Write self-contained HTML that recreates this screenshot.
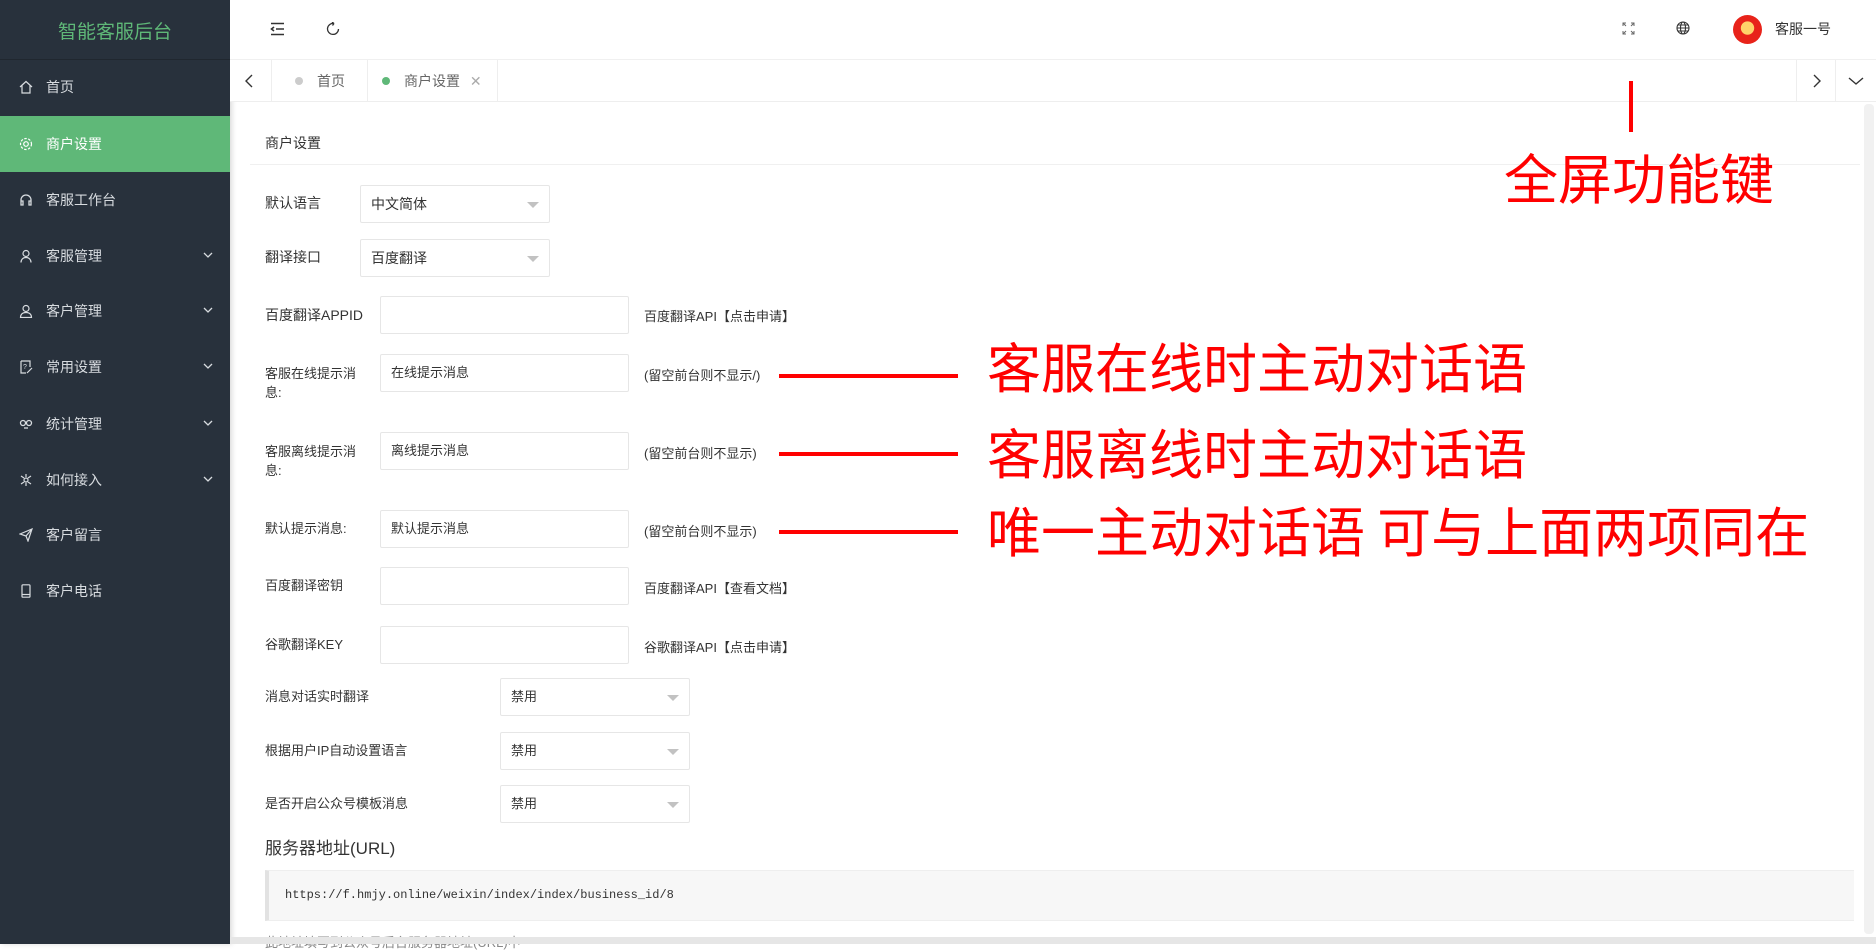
<!DOCTYPE html>
<html><head><meta charset="utf-8"><style>
*{box-sizing:border-box;margin:0;padding:0}
body{width:1876px;height:944px;overflow:hidden;background:#fff;font-family:"Liberation Sans","Noto Sans CJK SC",sans-serif;font-size:14px;color:#333;position:relative}
.abs{position:absolute}
#side{left:0;top:0;width:230px;height:944px;background:#28313c;box-shadow:2px 0 5px rgba(0,0,0,.15)}
#logo{left:0;top:0;width:230px;height:60px;line-height:66px;text-align:center;color:#5fb878;font-size:19px;border-bottom:1px solid #20272f}
.mi{left:0;width:230px;height:56px;color:#d8dce0;font-size:14px;line-height:56px;padding-left:46px}
.mi.act{background:#5fb878;color:#fff}
.mi .ic{position:absolute;left:19px;top:21px;width:14px;height:14px}
.mi .ar{position:absolute;left:202px;top:21px}
#top{left:230px;top:0;width:1646px;height:60px;background:#fff;border-bottom:1px solid #f0f0f0}
#tabs{left:230px;top:60px;width:1646px;height:42px;background:#fff;border-bottom:1px solid #eee}
.sep{top:0;width:1px;height:42px;background:#eee}
.tab{top:0;height:42px;line-height:42px;color:#666;font-size:14px}
.dot{display:inline-block;width:8px;height:8px;border-radius:50%;margin-right:14px;vertical-align:1px}
.lbl{left:265px;font-size:14px;color:#333;line-height:18px}
.inp{height:38px;border:1px solid #e6e6e6;border-radius:2px;background:#fff;padding-left:10px;line-height:36px;font-size:14px;color:#333}
.sel::after{content:"";position:absolute;right:10px;top:16px;border:6px solid transparent;border-top-color:#c2c2c2;border-top-width:6px}
.help{left:644px;font-size:13px;color:#333}
.red{background:#f00}
.rt{color:#f00;font-family:"WenQuanYi Zen Hei","Noto Sans CJK SC",sans-serif;font-size:54px;line-height:60px;white-space:nowrap}
</style></head><body>
<div id="side" class="abs"></div>
<div id="logo" class="abs">智能客服后台</div>

<div class="abs mi" style="top:59px"><svg class="ic" viewBox="0 0 14 14" fill="none" stroke="#d8dce0" stroke-width="1.2"><path d="M1 7L7 1.5 13 7M3 5.5V13h8V5.5"/></svg>首页</div>
<div class="abs mi act" style="top:116px"><svg class="ic" viewBox="0 0 14 14" fill="none" stroke="#fff" stroke-width="1.2"><circle cx="7" cy="7" r="2.3"/><circle cx="7" cy="7" r="5.5" stroke-dasharray="2.5 1.5"/></svg>商户设置</div>
<div class="abs mi" style="top:172px"><svg class="ic" viewBox="0 0 14 14" fill="none" stroke="#d8dce0" stroke-width="1.3"><path d="M2 9V7a5 5 0 0110 0v2M2 8h2v4H2zM10 8h2v4h-2z"/></svg>客服工作台</div>
<div class="abs mi" style="top:228px"><svg class="ic" viewBox="0 0 14 14" fill="none" stroke="#d8dce0" stroke-width="1.2"><circle cx="7" cy="4.5" r="3"/><path d="M2 13.5c0-3 2-5 5-5s5 2 5 5"/></svg>客服管理<svg class="ar" width="12" height="12" viewBox="0 0 12 12" fill="none" stroke="#d8dce0" stroke-width="1.3"><path d="M2 4l4 4 4-4"/></svg></div>
<div class="abs mi" style="top:283px"><svg class="ic" viewBox="0 0 14 14" fill="none" stroke="#d8dce0" stroke-width="1.2"><circle cx="7" cy="4.5" r="3"/><path d="M1.5 13.5c0-3 2-5 5.5-5s5.5 2 5.5 5z"/></svg>客户管理<svg class="ar" width="12" height="12" viewBox="0 0 12 12" fill="none" stroke="#d8dce0" stroke-width="1.3"><path d="M2 4l4 4 4-4"/></svg></div>
<div class="abs mi" style="top:339px"><svg class="ic" viewBox="0 0 14 14" fill="none" stroke="#d8dce0" stroke-width="1.2"><path d="M2 1h9v6M2 1v12h5M8 13l5-5"/><text x="4" y="9" font-size="7" fill="#d8dce0" stroke="none">?</text></svg>常用设置<svg class="ar" width="12" height="12" viewBox="0 0 12 12" fill="none" stroke="#d8dce0" stroke-width="1.3"><path d="M2 4l4 4 4-4"/></svg></div>
<div class="abs mi" style="top:396px"><svg class="ic" viewBox="0 0 14 14" fill="none" stroke="#d8dce0" stroke-width="1.3"><circle cx="4" cy="6" r="2.5"/><circle cx="10" cy="6" r="2.5"/><path d="M5 11h4"/></svg>统计管理<svg class="ar" width="12" height="12" viewBox="0 0 12 12" fill="none" stroke="#d8dce0" stroke-width="1.3"><path d="M2 4l4 4 4-4"/></svg></div>
<div class="abs mi" style="top:452px"><svg class="ic" viewBox="0 0 14 14" fill="none" stroke="#d8dce0" stroke-width="1.2"><path d="M2 3l3 2M12 3l-3 2M2 11l3-2M12 11l-3-2M7 1v3M7 10v3"/><circle cx="7" cy="7" r="2"/></svg>如何接入<svg class="ar" width="12" height="12" viewBox="0 0 12 12" fill="none" stroke="#d8dce0" stroke-width="1.3"><path d="M2 4l4 4 4-4"/></svg></div>
<div class="abs mi" style="top:507px"><svg class="ic" viewBox="0 0 14 14" fill="none" stroke="#d8dce0" stroke-width="1.2"><path d="M1 6l12-5-4 12-2-5zM7 8l6-7"/></svg>客户留言</div>
<div class="abs mi" style="top:563px"><svg class="ic" viewBox="0 0 14 14" fill="none" stroke="#d8dce0" stroke-width="1.2"><rect x="3" y="0.8" width="8" height="12.4" rx="1"/><path d="M3 10.5h8"/></svg>客户电话</div>

<div id="top" class="abs"></div>
<svg class="abs" style="left:270px;top:22px" width="15" height="14" viewBox="0 0 15 14" fill="none" stroke="#333" stroke-width="1.6"><path d="M1 1.5h13M6 7h8M1 12.5h13M4 5L1.5 7 4 9"/></svg>
<svg class="abs" style="left:326px;top:22px" width="14" height="14" viewBox="0 0 14 14" fill="none" stroke="#333" stroke-width="1.3"><path d="M8 1.5A5.5 5.5 0 1 0 12.5 7M8 1.5l-2-1.5M8 1.5l-1.5 2"/></svg>
<svg class="abs" style="left:1622px;top:22px" width="13" height="13" viewBox="0 0 13 13" fill="none" stroke="#666" stroke-width="1"><path d="M1 4V1h3M1 1l3 3M12 4V1H9M12 1L9 4M1 9v3h3M1 12l3-3M12 9v3H9M12 12L9 9"/></svg>
<svg class="abs" style="left:1676px;top:21px" width="14" height="14" viewBox="0 0 14 14" fill="none" stroke="#333" stroke-width="1.1"><circle cx="7" cy="7" r="6"/><ellipse cx="7" cy="7" rx="2.5" ry="6"/><path d="M1 7h12M2 4h10M2 10h10"/></svg>
<div class="abs" style="left:1733px;top:15px;width:29px;height:29px;border-radius:50%;background:radial-gradient(circle at 50% 45%,#ffd36a 0 30%,#e8231a 32%)"></div>
<div class="abs" style="left:1775px;top:19px;font-size:14px;color:#333">客服一号</div>

<div id="tabs" class="abs"></div>
<svg class="abs" style="left:244px;top:74px" width="12" height="14" viewBox="0 0 12 14" fill="none" stroke="#333" stroke-width="1.4"><path d="M8 1L2 7l6 6"/></svg>
<div class="abs sep" style="left:271px;top:60px"></div>
<div class="abs tab" style="left:295px;top:60px"><span class="dot" style="background:#ccc"></span>首页</div>
<div class="abs sep" style="left:367px;top:60px"></div>
<div class="abs tab" style="left:382px;top:60px"><span class="dot" style="background:#5fb878"></span>商户设置 <span style="color:#aaa;margin-left:6px">✕</span></div>
<div class="abs sep" style="left:497px;top:60px"></div>
<div class="abs sep" style="left:1796px;top:60px"></div>
<div class="abs sep" style="left:1835px;top:60px"></div>
<svg class="abs" style="left:1811px;top:74px" width="12" height="14" viewBox="0 0 12 14" fill="none" stroke="#333" stroke-width="1.4"><path d="M3 1l6 6-6 6"/></svg>
<svg class="abs" style="left:1848px;top:75px" width="16" height="12" viewBox="0 0 16 12" fill="none" stroke="#333" stroke-width="1.4"><path d="M1 3l7 6 7-6"/></svg>

<div class="abs" style="left:250px;top:164px;width:1610px;height:1px;background:#f0f0f0"></div>
<div class="abs" style="left:1864px;top:104px;width:10px;height:830px;background:#f1f1f1;border-radius:4px"></div>
<div class="abs lbl" style="top:134px">商户设置</div>

<div class="abs lbl" style="top:194px">默认语言</div>
<div class="abs inp sel" style="left:360px;top:185px;width:190px">中文简体</div>
<div class="abs lbl" style="top:248px">翻译接口</div>
<div class="abs inp sel" style="left:360px;top:239px;width:190px">百度翻译</div>

<div class="abs lbl" style="top:306px">百度翻译APPID</div>
<div class="abs inp" style="left:380px;top:296px;width:249px"></div>
<div class="abs help" style="top:306px">百度翻译API【点击申请】</div>

<div class="abs lbl" style="top:364px;font-size:13px;width:100px;line-height:19px">客服在线提示消息:</div>
<div class="abs inp" style="left:380px;top:354px;width:249px;font-size:13px">在线提示消息</div>
<div class="abs help" style="top:365px">(留空前台则不显示/)</div>

<div class="abs lbl" style="top:442px;font-size:13px;width:100px;line-height:19px">客服离线提示消息:</div>
<div class="abs inp" style="left:380px;top:432px;width:249px;font-size:13px">离线提示消息</div>
<div class="abs help" style="top:443px">(留空前台则不显示)</div>

<div class="abs lbl" style="top:520px;font-size:13px">默认提示消息:</div>
<div class="abs inp" style="left:380px;top:510px;width:249px;font-size:13px">默认提示消息</div>
<div class="abs help" style="top:521px">(留空前台则不显示)</div>

<div class="abs lbl" style="top:577px;font-size:13px">百度翻译密钥</div>
<div class="abs inp" style="left:380px;top:567px;width:249px"></div>
<div class="abs help" style="top:578px">百度翻译API【查看文档】</div>

<div class="abs lbl" style="top:636px;font-size:13px">谷歌翻译KEY</div>
<div class="abs inp" style="left:380px;top:626px;width:249px"></div>
<div class="abs help" style="top:637px">谷歌翻译API【点击申请】</div>

<div class="abs lbl" style="top:688px;font-size:13px">消息对话实时翻译</div>
<div class="abs inp sel" style="left:500px;top:678px;width:190px;font-size:13px">禁用</div>
<div class="abs lbl" style="top:742px;font-size:13px">根据用户IP自动设置语言</div>
<div class="abs inp sel" style="left:500px;top:732px;width:190px;font-size:13px">禁用</div>
<div class="abs lbl" style="top:795px;font-size:13px">是否开启公众号模板消息</div>
<div class="abs inp sel" style="left:500px;top:785px;width:190px;font-size:13px">禁用</div>

<div class="abs lbl" style="top:838px;font-size:17px;line-height:22px">服务器地址(URL)</div>
<div class="abs" style="left:265px;top:870px;width:1589px;height:51px;background:#f7f7f7;border-left:4px solid #e2e2e2;border-top:1px solid #eee;border-bottom:1px solid #eee;font-family:'Liberation Mono',monospace;font-size:12px;line-height:49px;padding-left:16px;color:#333">https://f.hmjy.online/weixin/index/index/business_id/8</div>
<div class="abs lbl" style="top:934px;font-size:13px;color:#888">此地址填写到公众号后台服务器地址(URL)中</div>
<div class="abs" style="left:230px;top:937px;width:1646px;height:7px;background:#e6e6e6"></div>

<div class="abs red" style="left:1629px;top:81px;width:4px;height:51px"></div>
<div class="abs rt" style="left:1504px;top:146px">全屏功能键</div>
<div class="abs red" style="left:779px;top:374px;width:179px;height:4px"></div>
<div class="abs red" style="left:779px;top:452px;width:179px;height:4px"></div>
<div class="abs red" style="left:779px;top:530px;width:179px;height:4px"></div>
<div class="abs rt" style="left:987px;top:335px">客服在线时主动对话语</div>
<div class="abs rt" style="left:987px;top:421px">客服离线时主动对话语</div>
<div class="abs rt" style="left:987px;top:499px">唯一主动对话语 可与上面两项同在</div>
</body></html>
